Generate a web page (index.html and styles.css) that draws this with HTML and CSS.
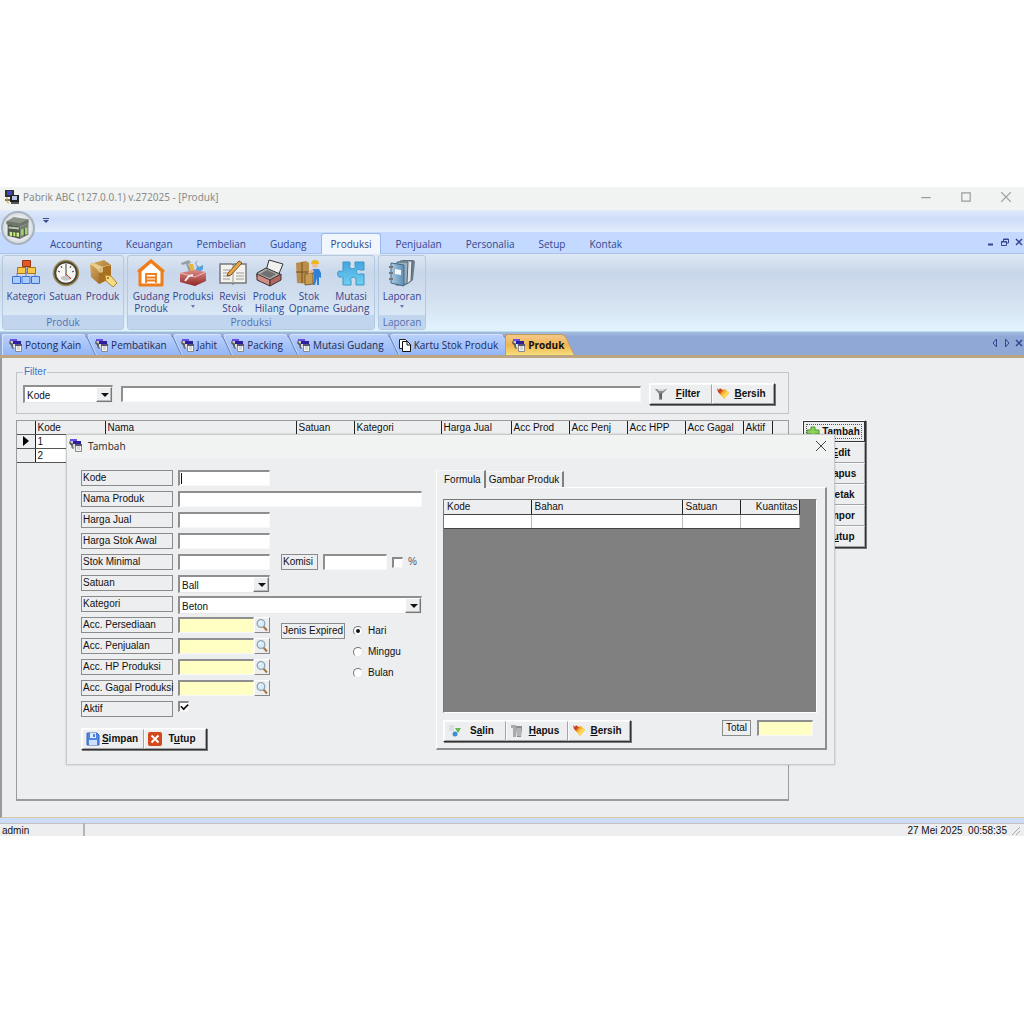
FILE: index.html
```html
<!DOCTYPE html>
<html lang="id">
<head>
<meta charset="utf-8">
<title>Pabrik ABC - Produk</title>
<link rel="stylesheet" href="styles.css">
</head>
<body>
<svg class="defs" aria-hidden="true">
  <defs>
    <linearGradient id="bookg" x1="0" x2="1"><stop offset="0" stop-color="#a9c9e2"/><stop offset="1" stop-color="#5f8db4"/></linearGradient>
    <linearGradient id="blueg" x1="0" y1="0" x2="0" y2="1"><stop offset="0" stop-color="#45a5e0"/><stop offset="1" stop-color="#6fd0f2"/></linearGradient>
    <linearGradient id="redg" x1="0" y1="0" x2="0" y2="1"><stop offset="0" stop-color="#de8a86"/><stop offset="1" stop-color="#8f2723"/></linearGradient>
    <linearGradient id="boxg" x1="0" y1="0" x2="1" y2="1"><stop offset="0" stop-color="#e0b263"/><stop offset="1" stop-color="#8a5a1c"/></linearGradient>
    <symbol id="forms" viewBox="0 0 14 14">
      <path d="M1 1h7v6H1z" fill="#c9c9d6"/><path d="M1 1h7v2H1z" fill="#6a4fe0"/><path d="M1 3v3h2v2h1" fill="none" stroke="#333"/>
      <path d="M4 4h8v6H4z" fill="#ddd"/><path d="M4 3h8v3H4z" fill="#2c1f9e"/><path d="M3 5v5h2" fill="none" stroke="#555"/>
      <path d="M6.500 6.500h6v7h-6z" fill="#f2f2f2" stroke="#8a8a8a"/><path d="M6 6h7v2H6z" fill="#5a5570"/><path d="M8 9h3M8 11h3" stroke="#bbb"/>
    </symbol>
    <symbol id="copy" viewBox="0 0 14 14">
      <path d="M1.500 1.500h6l2 2v7h-8z" fill="#fff" stroke="#222"/><path d="M4.500 3.500h5l3 3v7h-8z" fill="#fff" stroke="#111"/><path d="M9 3.500v3.500h4" fill="none" stroke="#111"/>
    </symbol>
    <symbol id="broom" viewBox="0 0 14 14">
      <path d="M1 1l1 4 3 3 4-4-4-2-1-1-1 2z" fill="#c8401c"/><path d="M4 7l5-5 4 4-5 6z" fill="#f4b728"/><path d="M6 9l5-5 2 2-5 6z" fill="#fbd75e"/><path d="M5 4l4-2-5 5z" fill="#e4731c"/>
    </symbol>
    <symbol id="lens" viewBox="0 0 14 14">
      <path d="M8 8l4 4.500" stroke="#a9763d" stroke-width="2"/><circle cx="6" cy="5.500" r="3.800" fill="#d8ecf7" stroke="#8fa5b5" stroke-width="1.300"/><path d="M4 5a2 2 0 0 1 2-2" stroke="#fff" fill="none"/>
    </symbol>
  </defs>
</svg>

<div class="app">
  <header class="titlebar">
    <svg class="app-icon" viewBox="0 0 14 14"><path d="M0 0h9v7H0z" fill="#333"/><path d="M2 1h5v4H2z" fill="#3f49d0"/><path d="M5 5h9v7H5z" fill="#222"/><path d="M7 6h5v4H7z" fill="#b9c6e8"/><path d="M0 9h5v2H0z" fill="#777"/><path d="M2 7v5l2 1" stroke="#caa72a" fill="none"/><path d="M6 12h8v2H6z" fill="#555"/></svg>
    <span class="title">Pabrik ABC (127.0.0.1) v.272025 - [Produk]</span>
    <div class="window-buttons">
      <button aria-label="Minimize"><svg viewBox="0 0 10 10"><path d="M1 5.500h8" /></svg></button>
      <button aria-label="Maximize"><svg viewBox="0 0 10 10"><path d="M1.500 1.500h7v7h-7z"/></svg></button>
      <button aria-label="Close"><svg viewBox="0 0 10 10"><path d="M1 1l8 8M9 1l-8 8"/></svg></button>
    </div>
  </header>

  <div class="ribbon">
    <div class="quick-access">
      <button class="orb" aria-label="Menu utama">
        <svg viewBox="0 0 24 24"><path d="M1 5l7-4 14 2v4l-8 2-13-1z" fill="#8d9489"/><path d="M1 5l13 2 8-4v4l-8 3-13-2z" fill="#6d756c"/><path d="M2 8l12 2v12L2 19z" fill="#51594f"/><path d="M14 10l8-3v11l-8 4z" fill="#767f71"/><path d="M3 10l10 1v2L3 12z" fill="#b9c9b0"/><path d="M4 15l9 1v4l-9-1z" fill="#c9ef84"/><path d="M15 13l6-2v6l-6 2z" fill="#a9cf80"/><path d="M7 15v5M10 15v5M18 12v7" stroke="#2f402c"/></svg>
      </button>
      <svg class="qa-arrow" viewBox="0 0 6 6"><path d="M0 .5h6" stroke="#3b4a8c"/><path d="M0 2h6L3 5z" fill="#3b4a8c"/></svg>
    </div>
    <nav class="ribbon-tabs">
      <a href="#">Accounting</a><a href="#">Keuangan</a><a href="#">Pembelian</a><a href="#">Gudang</a><a href="#" class="active">Produksi</a><a href="#">Penjualan</a><a href="#">Personalia</a><a href="#">Setup</a><a href="#">Kontak</a>
      <div class="mdi-buttons">
        <button aria-label="Minimize Produk"><svg viewBox="0 0 8 8"><path d="M1 6.500h5" stroke-width="2"/></svg></button>
        <button aria-label="Restore Produk"><svg viewBox="0 0 8 8"><path d="M2.500 3V1h5v4H6M.5 3.500h5v4h-5z M2 1.500h6M0 4h6"/></svg></button>
        <button aria-label="Close Produk"><svg viewBox="0 0 8 8"><path d="M1 1l6 6M7 1L1 7" stroke-width="1.500"/></svg></button>
      </div>
    </nav>
    <div class="ribbon-panel">
      <section class="group">
        <div class="group-items">
          <button class="tool wide"><svg viewBox="0 0 28 28"><path d="M14 8v6M5 19v-5h18v5M14 14v5" stroke="#6b7fb3" fill="none"/><path d="M10.500 1.500h8v6h-8z" fill="#e2572a" stroke="#9c3512"/><path d="M5.500 8.500h8v6h-8zM15.500 8.500h8v6h-8z" fill="#fbc64a" stroke="#a9761c"/><path d="M.5 17.500h8v7h-8zM10 17.500h8v7h-8zM19.500 17.500h8v7h-8z" fill="#a9cbff" stroke="#3f6fd1"/></svg>Kategori</button>
          <button class="tool"><svg viewBox="0 0 28 28"><circle cx="14" cy="14" r="12.500" fill="#4b4436" stroke="#a08f5c" stroke-width="1.500"/><circle cx="14" cy="14" r="9.800" fill="#f5f6f2"/><path d="M14 18V5M6 12l2 1M22 12l-2 1M9 7l1 2M19 7l-1 2" stroke="#3e3e3e"/><path d="M8 19a8 8 0 0 0 12 0l-3-2h-6z" fill="#c3c6c4"/><path d="M14 15l5 5" stroke="#c24030"/></svg>Satuan</button>
          <button class="tool"><svg viewBox="0 0 28 28"><path d="M1 5l14-4 7 5v13l-12 6L2 18z" fill="url(#boxg)"/><path d="M1 5l9 4 12-3" stroke="#f5d898" fill="none"/><path d="M10 9v16l12-6V6z" fill="#a97023"/><path d="M5 4l9 4v5l-3 1-8-9z" fill="#f1dda7" opacity=".7"/><path d="M16 16l6 1 6 7-4 4-7-6z" fill="#f7dc85" stroke="#b18628"/><circle cx="19" cy="19" r="1" fill="#8b5c14"/></svg>Produk</button>
        </div>
        <h2>Produk</h2>
      </section>
      <section class="group">
        <div class="group-items">
          <button class="tool wide"><svg viewBox="0 0 28 28"><path d="M3 12L14 2l11 10v14H3z" fill="#fff" stroke="#ef7d1a" stroke-width="3" stroke-linejoin="round"/><path d="M2 12L14 2l12 10" stroke="#ef7d1a" stroke-width="3" fill="none" stroke-linecap="round"/><path d="M9 24v-9h10v9M9 18.500h10M9 21.500h10" stroke="#ef7d1a" stroke-width="1.800" fill="none"/></svg>Gudang<br>Produk</button>
          <button class="tool wide"><svg viewBox="0 0 28 28"><path d="M2 4l8-3 2 3-3 1 5 9-3 2L7 5 3 6z" fill="#9a9ea3"/><path d="M10 5h4l2 8h-4z" fill="#e9b43a"/><path d="M19 1l-2 4 3 3 4-2v4l-6 6-3-2 3-6-2-4z" fill="#58a0dc"/><path d="M1 14l14-3 12 2v9l-11 5L1 23z" fill="url(#redg)"/><path d="M1 14l15 4 11-5" stroke="#f3b9b4" fill="none"/><path d="M6 22l4-5 4-1" stroke="#eee" stroke-width="2" fill="none"/></svg>Produksi<svg class="drop" viewBox="0 0 6 4"><path d="M1 0h4L3 3z" fill="#6278b5"/></svg></button>
          <button class="tool"><svg viewBox="0 0 28 28"><path d="M1 5h12l1 1 1-1h12v19H15l-1 1-1-1H1z" fill="#f4f2ec" stroke="#77797a" stroke-width="1.500"/><path d="M14 7v17M4 11h7M4 14h7M4 17h7M4 20h7M17 14h8M17 17h8M17 20h8" stroke="#9a9a98"/><path d="M9 14L20 2l3 2-11 12-4 1z" fill="#e6a74b" stroke="#7b5020"/></svg>Revisi<br>Stok</button>
          <button class="tool"><svg viewBox="0 0 28 28"><path d="M13 1l14 4-5 12-12-5z" fill="#f1f1ef" stroke="#333"/><path d="M1 14l9-5 14 6v3l-9 6L1 18z" fill="#a9a9a7" stroke="#333"/><path d="M1 15l13 6v6L1 21z" fill="#cf8d88" stroke="#45302e"/><path d="M14 21l11-6v6l-11 6z" fill="#ae6963" stroke="#45302e"/><path d="M4 15l7-4 9 4-6 4z" fill="#70706e"/></svg>Produk<br>Hilang</button>
          <button class="tool wide"><svg viewBox="0 0 28 28"><path d="M1 4l10-2 3 2v21L2 24z" fill="#b98d4c"/><path d="M1 13h13M7 3v21" stroke="#70511f"/><path d="M10 15l8-1v11l-8 1z" fill="#c79c57" stroke="#806027"/><circle cx="20" cy="6" r="3" fill="#efbf9a"/><path d="M16 5a4 4 0 0 1 8 0z" fill="#f0b71c"/><path d="M18 10h6l2 4v5l-2-1v8h-2v-7l-2 7h-2l1-10-2-3z" fill="#2f80d8"/><path d="M13 13l5-3 1 3-5 2z" fill="#e8b18b"/></svg>Stok<br>Opname</button>
          <button class="tool wide"><svg viewBox="0 0 28 28"><path d="M6 3h7v3c-2 5 7 5 5 0V3h9v8h-4c-4-3-5 6 0 4h4v11h-8v-4c1-5-7-5-5 0v4H6v-8c-1-1-2 1-4 0-2-2-2-5 0-6 2 0 3 1 4 0z" fill="url(#blueg)" stroke="#3a95c4"/></svg>Mutasi<br>Gudang</button>
        </div>
        <h2>Produksi</h2>
      </section>
      <section class="group">
        <div class="group-items">
          <button class="tool wide"><svg viewBox="0 0 28 28"><path d="M14 1h12l1 2-2 18-4 3H13z" fill="#6d7e8c"/><path d="M12 2h12l-1 20-4 3h-8z" fill="#dfe6ea" stroke="#59636d"/><path d="M9 3h11l-1 21-3 2H8z" fill="#9cb0bf" stroke="#4b6578"/><path d="M3 4l13 2v21L3 24z" fill="url(#bookg)" stroke="#426a8c"/><path d="M7 10l6 1v5l-6-1z" fill="#f4f7f9"/><path d="M1 8h4M1 14h4M1 20h4" stroke="#777" stroke-width="2"/></svg>Laporan<svg class="drop" viewBox="0 0 6 4"><path d="M1 0h4L3 3z" fill="#6278b5"/></svg></button>
        </div>
        <h2>Laporan</h2>
      </section>
    </div>
  </div>

  <nav class="doc-tabs">
    <a href="#" class="first"><svg><use href="#forms"/></svg><span>Potong Kain</span></a>
    <a href="#"><svg><use href="#forms"/></svg><span>Pembatikan</span></a>
    <a href="#"><svg><use href="#forms"/></svg><span>Jahit</span></a>
    <a href="#"><svg><use href="#forms"/></svg><span>Packing</span></a>
    <a href="#"><svg><use href="#forms"/></svg><span>Mutasi Gudang</span></a>
    <a href="#"><svg><use href="#copy"/></svg><span>Kartu Stok Produk</span></a>
    <a href="#" class="active"><svg><use href="#forms"/></svg><span>Produk</span></a>
    <div class="doc-nav">
      <button aria-label="Tab sebelumnya"><svg viewBox="0 0 8 8"><path d="M5.500 0v8L2 4z"/></svg></button>
      <button aria-label="Tab berikutnya"><svg viewBox="0 0 8 8"><path d="M2.500 0v8L6 4z"/></svg></button>
      <button aria-label="Tutup tab"><svg viewBox="0 0 8 8"><path d="M1 1l6 6M7 1L1 7" stroke-width="1.500"/></svg></button>
    </div>
  </nav>

  <main class="workspace">
    <div class="browse">
      <fieldset class="filter">
        <legend>Filter</legend>
        <span class="combo filter-field"><select aria-label="Kolom filter"><option>Kode</option></select></span>
        <input class="text" type="text" aria-label="Kata kunci">
        <div class="button-bar">
          <button class="btn"><svg viewBox="0 0 14 14"><path d="M1 2h12L8 7v5l-3 1V7z" fill="#8d8d8d"/><path d="M3 2h9l-3 2H5z" fill="#d9d9d9"/><path d="M5 7l3-1v6l-1 1z" fill="#5f5f5f"/></svg><span><u>F</u>ilter</span></button>
          <button class="btn"><svg><use href="#broom"/></svg><span><u>B</u>ersih</span></button>
        </div>
      </fieldset>
      <div class="product-grid">
        <table>
          <colgroup><col class="w18"><col class="w70"><col class="w191"><col class="w58"><col class="w87"><col class="w70"><col class="w58"><col class="w58"><col class="w58"><col class="w58"><col class="w29"></colgroup>
          <thead><tr><th></th><th>Kode</th><th>Nama</th><th>Satuan</th><th>Kategori</th><th>Harga Jual</th><th>Acc Prod</th><th>Acc Penj</th><th>Acc HPP</th><th>Acc Gagal</th><th>Aktif</th></tr></thead>
          <tbody>
            <tr><th><svg class="marker" viewBox="0 0 6 10"><path d="M0 0l6 5-6 5z"/></svg></th><td>1</td><td></td><td></td><td></td><td></td><td></td><td></td><td></td><td></td><td></td></tr>
            <tr><th></th><td>2</td><td></td><td></td><td></td><td></td><td></td><td></td><td></td><td></td><td></td></tr>
          </tbody>
        </table>
      </div>
    </div>
    <div class="button-bar vertical">
      <button class="btn focused"><svg viewBox="0 0 14 14"><path d="M5 2h4v3h4v4H9v4H5V9H1V5h4z" fill="#8ed05a" stroke="#4a9a2a"/></svg><span><u>T</u>ambah</span></button>
      <button class="btn"><svg></svg><span><u>E</u>dit</span></button>
      <button class="btn"><svg></svg><span><u>H</u>apus</span></button>
      <button class="btn"><svg></svg><span><u>C</u>etak</span></button>
      <button class="btn"><svg></svg><span><u>I</u>mpor</span></button>
      <button class="btn"><svg></svg><span>T<u>u</u>tup</span></button>
    </div>

    <div class="dialog" role="dialog" aria-labelledby="dialog-title">
      <header class="dialog-title">
        <svg class="form-icon"><use href="#forms"/></svg>
        <h1 id="dialog-title">Tambah</h1>
        <button aria-label="Tutup dialog"><svg viewBox="0 0 10 10"><path d="M0 0l10 10M10 0L0 10"/></svg></button>
      </header>
      <div class="dialog-body">
        <form class="entry">
          <div class="fields">
            <label class="tag" for="kode">Kode</label><div class="field"><input class="text" id="kode" type="text"><i class="caret"></i></div>
            <label class="tag" for="nama">Nama Produk</label><div class="field full"><input class="text" id="nama" type="text"></div>
            <label class="tag" for="harga">Harga Jual</label><div class="field"><input class="text" id="harga" type="text"></div>
            <label class="tag" for="stokawal">Harga Stok Awal</label><div class="field"><input class="text" id="stokawal" type="text"></div>
            <label class="tag" for="stokmin">Stok Minimal</label><div class="field"><input class="text" id="stokmin" type="text"></div>
            <div class="komisi"><label class="tag" for="komisi">Komisi</label><input class="text" id="komisi" type="text"><label class="check"><input type="checkbox"><b>%</b></label></div>
            <label class="tag" for="satuan">Satuan</label><div class="field"><span class="combo"><select id="satuan"><option>Ball</option></select></span></div>
            <label class="tag" for="kategori">Kategori</label><div class="field full"><span class="combo"><select id="kategori"><option>Beton</option></select></span></div>
            <label class="tag" for="acc1">Acc. Persediaan</label><div class="field lookup"><input class="text" id="acc1" type="text"><button type="button" aria-label="Cari akun persediaan"><svg><use href="#lens"/></svg></button></div>
            <div class="expired" role="radiogroup" aria-label="Jenis Expired">
              <span class="tag">Jenis Expired</span>
              <div class="radios">
                <label><input type="radio" name="exp" checked>Hari</label>
                <label><input type="radio" name="exp">Minggu</label>
                <label><input type="radio" name="exp">Bulan</label>
              </div>
            </div>
            <label class="tag" for="acc2">Acc. Penjualan</label><div class="field lookup"><input class="text" id="acc2" type="text"><button type="button" aria-label="Cari akun penjualan"><svg><use href="#lens"/></svg></button></div>
            <label class="tag" for="acc3">Acc. HP Produksi</label><div class="field lookup"><input class="text" id="acc3" type="text"><button type="button" aria-label="Cari akun HP produksi"><svg><use href="#lens"/></svg></button></div>
            <label class="tag" for="acc4">Acc. Gagal Produksi</label><div class="field lookup"><input class="text" id="acc4" type="text"><button type="button" aria-label="Cari akun gagal produksi"><svg><use href="#lens"/></svg></button></div>
            <label class="tag" for="aktif">Aktif</label><div class="field"><input id="aktif" type="checkbox" checked></div>
          </div>
          <div class="button-bar">
            <button type="button" class="btn"><svg viewBox="0 0 14 14"><path d="M1 1h10l2 2v10H1z" fill="#4f86e0" stroke="#3765c0"/><path d="M4 1h6v5H4z" fill="#dfeaff"/><path d="M7 2h2v3H7z" fill="#4f86e0"/><path d="M3 8h8v5H3z" fill="#cfe0ff"/></svg><span><u>S</u>impan</span></button>
            <button type="button" class="btn"><svg viewBox="0 0 14 14"><rect width="14" height="14" rx="2" fill="#d4491c"/><path d="M3.500 3.500l7 7M10.500 3.500l-7 7" stroke="#fff" stroke-width="2"/></svg><span>T<u>u</u>tup</span></button>
          </div>
        </form>

        <section class="formula">
          <div class="tablist" role="tablist"><button role="tab" aria-selected="true">Formula</button><button role="tab" aria-selected="false">Gambar Produk</button></div>
          <div class="tabpanel" role="tabpanel">
            <div class="formula-grid">
              <table>
                <colgroup><col class="w87"><col class="w151"><col class="w58"><col class="w59"></colgroup>
                <thead><tr><th>Kode</th><th>Bahan</th><th>Satuan</th><th class="num">Kuantitas</th></tr></thead>
                <tbody><tr><td></td><td></td><td></td><td></td></tr></tbody>
              </table>
            </div>
            <div class="formula-footer">
              <div class="button-bar">
                <button class="btn"><svg viewBox="0 0 14 14"><path d="M1 1h5v6H1z" fill="#dcdfe2"/><path d="M7 4h6l-3 5z" fill="#62b84a"/><circle cx="7" cy="10" r="2.500" fill="#3e8ed2"/></svg><span>S<u>a</u>lin</span></button>
                <button class="btn"><svg viewBox="0 0 14 14"><path d="M1 1h5v12H3V4H1z" fill="#aaa"/><path d="M6 2h6v2l-1 9H7z" fill="#8c8c8c"/><path d="M8 4v8M10 4v8" stroke="#ddd"/></svg><span><u>H</u>apus</span></button>
                <button class="btn"><svg><use href="#broom"/></svg><span><u>B</u>ersih</span></button>
              </div>
              <div class="total"><label class="tag" for="total">Total</label><input class="text" id="total" type="text"></div>
            </div>
          </div>
        </section>
      </div>
    </div>
  </main>

  <footer class="statusbar">
    <span class="user">admin</span>
    <span class="clock">27 Mei 2025&nbsp; 00:58:35</span>
    <svg class="grip" viewBox="0 0 12 12"><path d="M12 4l-8 8M12 8l-4 4" stroke="#aaa"/></svg>
  </footer>
</div>
</body>
</html>
```
FILE: styles.css
```css
* { box-sizing: border-box; }
body { margin: 0; background: #fff; font: 10px/12px "Liberation Sans", Arial, sans-serif; color: #111; }
button, input, select { font: inherit; color: inherit; margin: 0; padding: 0; border-radius: 0; outline: 0; }
button { background: none; border: 0; }
a { color: inherit; text-decoration: none; }
h1, h2 { margin: 0; font-size: 10px; font-weight: 400; }
table { border-collapse: collapse; table-layout: fixed; width: 0; }
th { font-weight: 400; text-align: left; }
svg { display: block; flex: none; }
.defs { position: absolute; width: 0; height: 0; }

.app { display: flex; flex-direction: column; margin: 187px 0; background: #edeef0; }

/* title bar */
.titlebar { display: flex; align-items: center; height: 23px; padding: 0 12px 4px 5px; gap: 4px; background: #f1f3f2; font: 10px/14px "Noto Sans", sans-serif; color: #8b8b8b; }
.app-icon { width: 14px; height: 14px; }
.window-buttons { display: flex; margin-left: auto; gap: 28px; }
.window-buttons svg { width: 12px; height: 12px; fill: none; stroke: #9b9b9b; }

/* ribbon */
.ribbon { font: 10px/12px "Open Sans", sans-serif; color: #35458f; }
.quick-access { display: flex; align-items: flex-start; height: 22px; padding: 1px 1px 0; gap: 8px; background: linear-gradient(#e2eafb, #cfddf8 40%, #e4ecfc); }
.orb { position: relative; z-index: 2; width: 34px; height: 34px; flex: none; display: grid; place-items: center; border: 2px solid #a9b3bd; border-radius: 50%; background: radial-gradient(#fff 30%, #cdd4db 80%); }
.orb svg { width: 26px; height: 25px; }
.qa-arrow { width: 6px; height: 6px; margin-top: 7px; }
.ribbon-tabs { display: flex; align-items: flex-end; gap: 4px; height: 22px; padding-left: 40px; background: #c3d9ff; border-bottom: 1px solid #a9c3ee; }
.ribbon-tabs > a { height: 20px; padding: 4px 9px 0; border: 1px solid transparent; border-bottom: 0; border-radius: 3px 3px 0 0; }
.ribbon-tabs > .active { margin-bottom: -1px; height: 21px; background: #f1f5fc; border-color: #9ab9ea; }
.mdi-buttons { display: flex; gap: 6px; margin: 0 1px 7px auto; }
.mdi-buttons svg { width: 8px; height: 8px; fill: none; stroke: #35458f; }
.ribbon-panel { display: flex; gap: 3px; padding: 1px 2px; background: linear-gradient(#dfe7f3, #c8d7ea 25%, #d3e0f0 60%, #e3f3fe); border-bottom: 1px solid #b9dfee; }
.group { display: flex; flex-direction: column; border: 1px solid #b3c9e0; border-radius: 3px; overflow: hidden; }
.group-items { display: flex; height: 59px; padding: 3px 2px 0 2px; }
.tool { display: flex; flex-direction: column; align-items: center; width: 37px; white-space: nowrap; }
.tool.wide { width: 42px; }
.tool > svg:first-child { width: 28px; height: 28px; margin-bottom: 3px; }
.tool > .drop { width: 6px; height: 4px; margin-top: 3px; }
.group h2 { height: 14px; line-height: 14px; text-align: center; background: #c1d5ee; color: #5470b0; }

/* document tabs */
.doc-tabs { display: flex; align-items: flex-end; height: 26px; padding-left: 5px; background: linear-gradient(#a5bcdc, #8fa8d6 20%); border-bottom: 3px solid #bda584; font: 10px/14px "Open Sans", sans-serif; font-weight: 500; color: #1e2b55; }
.doc-tabs > a { position: relative; display: flex; align-items: center; gap: 2px; height: 21px; padding: 0 10px 0 4px; }
.doc-tabs > a > * { position: relative; z-index: 1; }
.doc-tabs > a::before { content: ""; position: absolute; inset: 0; background: linear-gradient(#b9d0fb, #94b6f6); border: 1px solid #d7e4ff; border-bottom: 0; border-right-color: #6581bb; border-radius: 4px 5px 0 0; transform: skewX(25deg); }
.doc-tabs > .first::after, .doc-tabs > .active::after { content: ""; position: absolute; z-index: 0; inset: 0 50% 0 -3px; background: linear-gradient(#b9d0fb, #94b6f6); border: 1px solid #d7e4ff; border-width: 1px 0 0 1px; border-radius: 3px 0 0 0; }
.doc-tabs > .active { font-weight: 700; color: #111; padding-right: 6px; }
.doc-tabs > .active::before { background: linear-gradient(#f4c98a, #efb552 50%, #f7df7c); border-color: #c49a5c; }
.doc-tabs > .active::after { background: linear-gradient(#f4c98a, #efb552 50%, #f7df7c); border-color: #c49a5c; }
.doc-tabs > a svg, .form-icon { width: 14px; height: 14px; }
.doc-nav { display: flex; gap: 4px; margin: 0 1px 8px auto; }
.doc-nav svg { width: 8px; height: 8px; fill: none; stroke: #35458f; }

/* shared controls */
.text { appearance: none; display: block; min-width: 0; width: 100%; height: 16px; padding: 0 2px; background: #fff; border: 1px solid; border-width: 2px 1px 1px 2px; border-color: #8f8f8f #f8f8f8 #f8f8f8 #8f8f8f; }
.combo { position: relative; display: block; height: 18px; }
.combo select { appearance: none; display: block; width: 100%; height: 100%; padding: 2px 2px 0; background: #fff; border: 1px solid; border-width: 2px 1px 1px 2px; border-color: #8f8f8f #e8e8e8 #e8e8e8 #8f8f8f; }
.combo::before { content: ""; position: absolute; pointer-events: none; top: 2px; right: 1px; bottom: 1px; width: 14px; background: #edeef0; border: 1px solid; border-color: #fff #777 #777 #fff; box-shadow: inset -1px -1px #bbb; }
.combo::after { content: ""; position: absolute; pointer-events: none; right: 4px; top: 8px; border: 4px solid transparent; border-top-color: #111; border-bottom: 0; }
.tag { display: block; height: 16px; padding: 1px 1px; border: 1px solid #8b8b8b; white-space: nowrap; }
.button-bar { display: inline-flex; border: 1px solid; border-color: #fff #333 #333 #fff; box-shadow: 1px 1px #777; }
.btn { display: flex; align-items: center; width: 62px; height: 20px; padding: 0 3px; font-weight: 700; border: 1px solid; border-color: #fafafa #a5a5a5 #a5a5a5 #fafafa; }
.btn svg { width: 14px; height: 14px; }
.btn span { flex: 1; text-align: center; white-space: nowrap; }
.vertical { flex-direction: column; }
.vertical .btn { height: 21px; width: 100%; padding: 0 2px; }
.vertical .focused { border: 1px solid #333; outline: 1px dotted #555; outline-offset: -4px; }
input[type="checkbox"] { appearance: none; display: grid; place-items: center; width: 11px; height: 11px; background: #fff; border: 1px solid; border-width: 2px 1px 1px 2px; border-color: #8a8a8a #f4f4f4 #f4f4f4 #8a8a8a; }
input[type="checkbox"]:checked::before { content: ""; width: 7px; height: 4px; border: solid #111; border-width: 0 0 2px 2px; transform: translateY(-1px) rotate(-45deg) scale(.8); }
input[type="radio"] { appearance: none; display: grid; place-items: center; width: 10px; height: 10px; background: #fff; border: 1px solid; border-color: #777 #e5e5e5 #e5e5e5 #777; border-radius: 50%; }
input[type="radio"]:checked::before { content: ""; width: 4px; height: 4px; border-radius: 50%; background: #111; }

/* workspace */
.workspace { position: relative; display: grid; grid-template-columns: minmax(0, 773px) 64px; column-gap: 13px; min-height: 460px; padding: 8px 14px 16px; border-left: 2px solid #9a9a9a; border-bottom: 1px solid #d9c9a8; }
.browse { display: flex; flex-direction: column; gap: 6px; }
.filter { display: flex; align-items: center; gap: 8px; height: 48px; margin: 0; padding: 5px 13px 0 6px; border: 1px solid #c3c4c6; }
.filter legend { padding: 0 1px; color: #3d74cc; }
.filter-field { width: 90px; flex: none; }
.filter .text { flex: 1; }
.product-grid { flex: 1; border: 1px solid #9b9b9b; border-bottom-width: 2px; }
.product-grid th, .product-grid td { height: 14px; padding: 0 2px; border-right: 1px solid #222; border-bottom: 1px solid #555; line-height: 11px; white-space: nowrap; }
.product-grid td { background: #fff; }
.product-grid thead th { height: 13px; padding-top: 1px; }
.workspace > .vertical { align-self: start; margin-top: 54px; }
.marker { width: 6px; height: 10px; margin-left: 4px; }
.w18 { width: 18px; } .w29 { width: 29px; } .w58 { width: 58px; } .w59 { width: 59px; } .w70 { width: 70px; } .w87 { width: 87px; } .w151 { width: 151px; } .w191 { width: 191px; }

/* dialog */
.dialog { position: absolute; left: 64px; top: 76px; width: 769px; background: #edeef0; border: 1px solid #c9cacc; box-shadow: 0 0 2px rgba(0, 0, 0, .2); }
.dialog-title { display: flex; align-items: center; gap: 5px; height: 23px; padding: 0 8px 2px 2px; background: #f1f3f2; font: 10px/14px "Noto Sans", sans-serif; color: #333; }
.form-icon { margin-bottom: 2px; }
.dialog-title button { margin-left: auto; }
.dialog-title button svg { width: 10px; height: 10px; fill: none; stroke: #444; }
.dialog-body { display: grid; grid-template-columns: 341px 1fr; column-gap: 14px; padding: 12px 7px 14px 14px; }
.entry { display: flex; flex-direction: column; align-items: flex-start; }
.fields { display: grid; grid-template-columns: 92px 92px 1fr; grid-auto-rows: 21px; column-gap: 5px; width: 100%; height: 258px; align-items: start; }
.fields > .tag, .fields > .field { grid-column: 1; }
.fields > .field { grid-column: 2; position: relative; }
.fields > .full { grid-column: 2 / 4; }
.caret { position: absolute; left: 3px; top: 3px; width: 1px; height: 11px; background: #111; }
.komisi { grid-column: 3; display: flex; align-items: center; gap: 5px; padding-left: 6px; }
.komisi .tag { padding-right: 4px; }
.komisi .text { width: 64px; }
.check { display: flex; align-items: center; gap: 5px; }
.check b { font-weight: 400; color: #555; }
.lookup { display: flex; }
.lookup .text, .total .text { background: #ffffc4; }
.lookup button { width: 16px; height: 16px; flex: none; border: 1px solid; border-color: #fff #888 #888 #fff; }
.lookup svg { width: 14px; height: 14px; }
.expired { grid-column: 3; grid-row: 8 / 12; display: flex; gap: 8px; padding: 6px 0 0 6px; }
.radios { display: grid; grid-auto-rows: 21px; }
.radios label { display: flex; align-items: center; align-self: start; gap: 5px; height: 16px; }

/* formula tabs */
.tablist { display: flex; align-items: flex-end; height: 17px; }
.tablist button { height: 16px; padding: 1px 3px 0; border: 1px solid; border-width: 1px 2px 0 0; border-color: #f8f8f8 #808080 #fff #fff; }
.tablist [aria-selected="true"] { height: 18px; margin-bottom: -1px; padding: 0 3px 0 7px; border-left-width: 1px; background: #edeef0; position: relative; }
.tabpanel { height: 263px; padding: 11px 8px 0 6px; border: 1px solid; border-width: 1px 2px 2px 1px; border-color: #fff #8d8f91 #8d8f91 #fff; }
.formula-grid { height: 214px; background: #808080; border: 1px solid; border-color: #777 #fff #fff #777; }
.formula-grid th, .formula-grid td { height: 14px; padding: 1px 2px 0 3px; border-right: 1px solid #222; border-bottom: 1px solid #444; background: #edeef0; }
.formula-grid td { background: #fff; border-right-color: #bbb; }
.formula-grid .num { text-align: right; padding: 1px 1px 0; }
.formula-footer { display: flex; justify-content: space-between; align-items: flex-start; padding: 7px 4px 0 0; }
.total { display: flex; gap: 6px; }
.total .tag { padding: 1px 3px; }
.total .text { width: 56px; }

/* status bar */
.statusbar { display: flex; align-items: stretch; height: 18px; border-top: 5px solid #cdddf8; box-shadow: inset 0 1px #c2c2c2; padding-right: 4px; line-height: 15px; }
.user { width: 85px; padding-left: 2px; border-right: 2px solid #b5b5b5; }
.clock { margin: 0 1px 0 auto; }
.grip { width: 12px; height: 12px; }
```
